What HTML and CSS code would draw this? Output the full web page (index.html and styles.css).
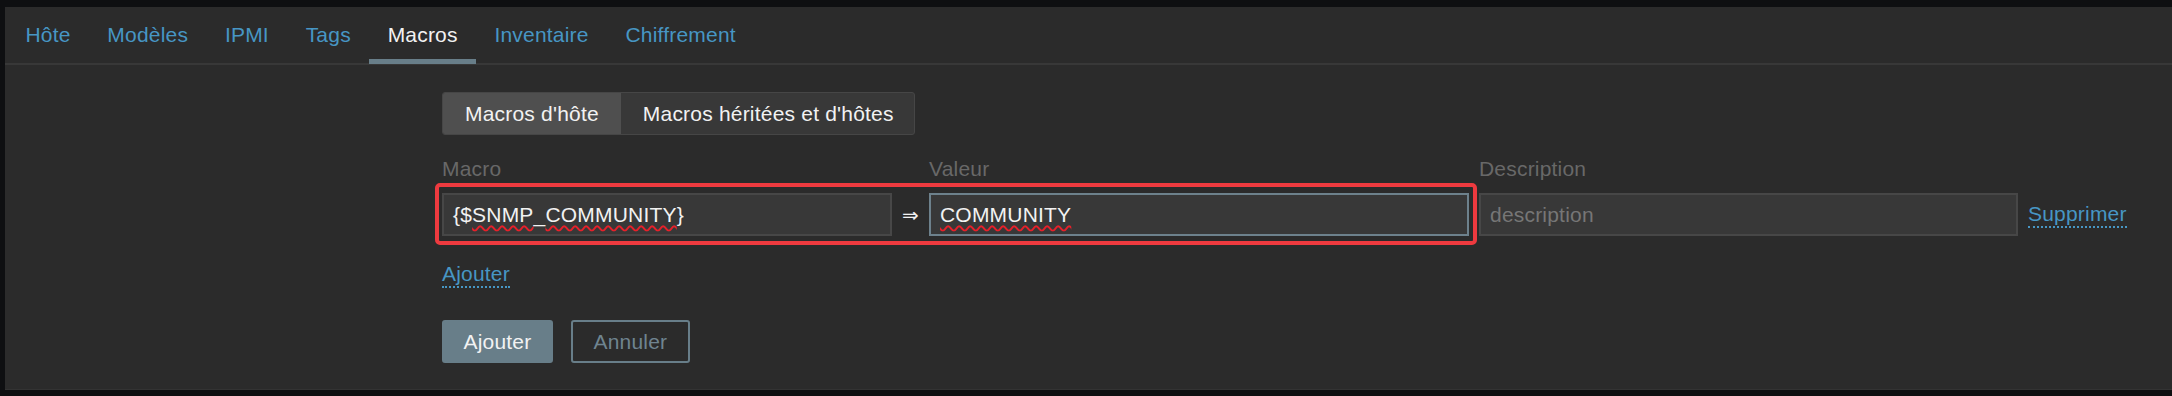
FILE: index.html
```html
<!DOCTYPE html>
<html lang="fr">
<head>
    <meta charset="UTF-8">
    <meta name="viewport" content="width=device-width, initial-scale=1.0">
    <title>Macros</title>
    <link rel="stylesheet" href="styles.css">
</head>
<body>
    <div class="panel">
        <ul class="tabs">
            <li><a href="#">Hôte</a></li>
            <li><a href="#">Modèles</a></li>
            <li><a href="#">IPMI</a></li>
            <li><a href="#">Tags</a></li>
            <li class="active"><a href="#">Macros</a></li>
            <li><a href="#">Inventaire</a></li>
            <li><a href="#">Chiffrement</a></li>
        </ul>

        <div class="tab-body">
            <div class="segmented">
                <span class="seg active">Macros d'hôte</span>
                <span class="seg">Macros héritées et d'hôtes</span>
            </div>

            <div class="macros">
                <div class="head col-macro">Macro</div>
                <div class="head col-value">Valeur</div>
                <div class="head col-desc">Description</div>

                <div class="field row col-macro">{$<span class="typo">SNMP</span>_<span class="typo">COMMUNITY</span>}</div>
                <div class="arrow row col-arrow">⇒</div>
                <div class="field focused row col-value"><span class="typo">COMMUNITY</span></div>
                <div class="field placeholder row col-desc">description</div>
                <a href="#" class="link remove row col-action">Supprimer</a>
                <div class="highlight"></div>
            </div>

            <a href="#" class="link add">Ajouter</a>

            <div class="buttons">
                <button class="btn primary">Ajouter</button>
                <button class="btn alt">Annuler</button>
            </div>
        </div>
    </div>
</body>
</html>
```

FILE: styles.css
```css
body {
    margin: 0;
    padding: 0;
    background-color: #0e0f11;
    font-family: "Liberation Sans", Arial, sans-serif;
    font-size: 21px;
    line-height: 24px;
    letter-spacing: 0.2px;
    color: #f2f2f2;
    overflow: hidden;
}

.panel {
    margin: 7px 0 0 5px;
    height: 383px;
    background-color: #2b2b2b;
    box-sizing: border-box;
    border-bottom: 1px solid #333;
}

.tabs {
    display: flex;
    list-style: none;
    margin: 0;
    padding: 0 0 0 2px;
    border-bottom: 2px solid #383838;
}

.tabs li {
    position: relative;
}

.tabs a {
    display: block;
    padding: 16px 18.4px;
    color: #4796c4;
    text-decoration: none;
}

.tabs .active a {
    color: #f2f2f2;
}

.tabs .active::after {
    content: "";
    position: absolute;
    left: 0;
    right: 0;
    bottom: -1px;
    height: 5px;
    background-color: #687e89;
}

.tab-body {
    padding: 27px 0 0 437px;
}

.segmented {
    display: inline-flex;
    border: 1px solid #464646;
    border-radius: 3px;
    overflow: hidden;
    background-color: #383838;
}

.seg {
    padding: 8.5px 22px;
    color: #f2f2f2;
}

.seg + .seg {
    padding: 8.5px 20px 8.5px 22px;
}

.seg.active {
    background-color: #4f4f4f;
}

.macros {
    display: grid;
    grid-template-columns: 450px 17px 540px 539px auto;
    grid-template-rows: 24px 43px;
    column-gap: 10px;
    row-gap: 12px;
    align-items: center;
    margin-top: 22px;
}

.head {
    grid-row: 1;
    color: #686868;
}

.row {
    grid-row: 2;
}

.col-macro { grid-column: 1; }
.col-arrow { grid-column: 2; }
.col-value { grid-column: 3; }
.col-desc { grid-column: 4; }
.col-action { grid-column: 5; }

.field {
    height: 43px;
    box-sizing: border-box;
    padding: 0 9px;
    border: 2px solid #474747;
    background-color: #383838;
    display: flex;
    align-items: center;
    white-space: pre;
}

.field.focused {
    border-color: #6d818c;
}

.field.placeholder {
    color: #767676;
}

.typo {
    text-decoration: underline wavy #e8202a;
    text-decoration-thickness: 1.5px;
    text-underline-offset: 3px;
}

.arrow {
    font-family: "DejaVu Sans", sans-serif;
    font-size: 20px;
    letter-spacing: 0;
    text-align: center;
    color: #f2f2f2;
}

.highlight {
    grid-row: 2;
    grid-column: 1 / 4;
    align-self: stretch;
    margin: -10px -8px -9px -7px;
    border: 4px solid #ee3a3f;
    border-radius: 5px;
    pointer-events: none;
}

.link {
    display: inline-block;
    color: #4796c4;
    text-decoration: none;
    border-bottom: 2px dotted #4796c4;
}

.remove {
    justify-self: start;
}

.add {
    margin-top: 26px;
}

.buttons {
    display: flex;
    gap: 18px;
    margin-top: 32px;
}

.btn {
    font-family: "Liberation Sans", Arial, sans-serif;
    font-size: 21px;
    letter-spacing: 0.2px;
    height: 43px;
    padding: 0 20.5px;
    border-radius: 3px;
    border: 2px solid #687e89;
    cursor: pointer;
}

.btn.primary {
    background-color: #687e89;
    color: #f2f2f2;
    padding: 0 19.5px;
}

.btn.alt {
    background-color: transparent;
    color: #6f8490;
}
```
